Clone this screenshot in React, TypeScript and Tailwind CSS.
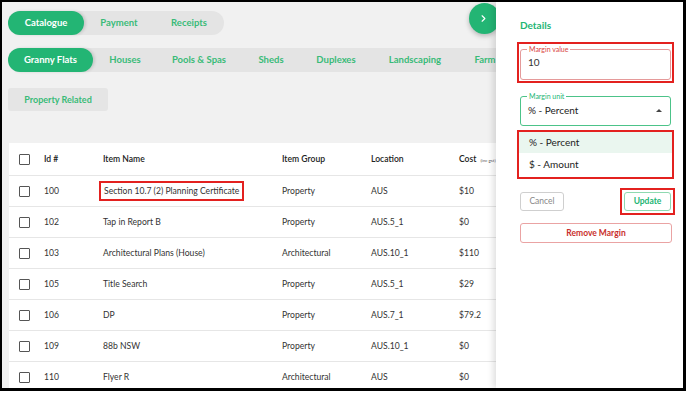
import { ChevronRight } from 'lucide-react'

const rows = [
  { id: '100', name: 'Section 10.7 (2) Planning Certificate', group: 'Property', loc: 'AUS', cost: '$10', marked: true },
  { id: '102', name: 'Tap in Report B', group: 'Property', loc: 'AUS.5_1', cost: '$0' },
  { id: '103', name: 'Architectural Plans (House)', group: 'Architectural', loc: 'AUS.10_1', cost: '$110' },
  { id: '105', name: 'Title Search', group: 'Property', loc: 'AUS.5_1', cost: '$29' },
  { id: '106', name: 'DP', group: 'Property', loc: 'AUS.7_1', cost: '$79.2' },
  { id: '109', name: '88b NSW', group: 'Property', loc: 'AUS.10_1', cost: '$0' },
  { id: '110', name: 'Flyer R', group: 'Architectural', loc: 'AUS', cost: '$0' },
]

const categories = [
  { label: 'Houses', w: 'w-[64px]' },
  { label: 'Pools & Spas', w: 'w-[84px]' },
  { label: 'Sheds', w: 'w-[60px]' },
  { label: 'Duplexes', w: 'w-[70px]' },
  { label: 'Landscaping', w: 'w-[88px]' },
  { label: 'Farm', w: 'w-[52px]' },
]

const cols = 'grid grid-cols-[35px_59px_179px_89px_88px_80px] items-center'

function Checkbox() {
  return <div className="ml-[10px] w-[11px] h-[11px] border border-[#555] rounded-[1px] bg-white" />
}

export default function App() {
  return (
    <div className="w-[688px] h-[393px] bg-white" style={{ fontFamily: 'Lato, "Open Sans", sans-serif' }}>
      <div className="w-[686px] h-[391px] border-black border-t-2 border-l-2 border-r-[3px] border-b-[3px] flex overflow-hidden">
        {/* Catalogue area */}
        <div className="relative w-[494px] h-full bg-[#f1f1f1] overflow-hidden">
          <div className="pl-[6px] pt-[9px]">
            <div className="flex w-[216px] h-[24px] rounded-full bg-[#e4e4e4] text-[9.5px] font-bold">
              <div className="w-[76px] rounded-full bg-[#23b574] text-white flex items-center justify-center shadow-[2px_0_3px_rgba(0,0,0,0.12)]">Catalogue</div>
              <div className="w-[70px] flex items-center justify-center text-[#39bb78]">Payment</div>
              <div className="w-[70px] flex items-center justify-center text-[#39bb78]">Receipts</div>
            </div>

            <div className="mt-[13px] flex h-[24px] w-[520px] rounded-l-full bg-[#e4e4e4] text-[9.5px] font-bold">
              <div className="w-[85px] rounded-full bg-[#23b574] text-white flex items-center justify-center shadow-[2px_0_3px_rgba(0,0,0,0.12)]">Granny Flats</div>
              {categories.map((c) => (
                <div key={c.label} className={`${c.w} flex items-center justify-center text-[#39bb78]`}>
                  {c.label}
                </div>
              ))}
            </div>

            <div className="mt-[16px] w-[100px] h-[23px] rounded-[3px] bg-[#e5e5e5] text-[#39bb78] text-[9px] font-bold flex items-center justify-center">
              Property Related
            </div>
          </div>

          {/* Table */}
          <div className="mt-[32px] ml-[7px] w-[520px] bg-white text-[8.6px] text-[#333]">
            <div className={`${cols} h-[33px] border-b border-[#e6e6e6] font-semibold text-[#222]`}>
              <Checkbox />
              <div>Id #</div>
              <div>Item Name</div>
              <div>Item Group</div>
              <div>Location</div>
              <div className="flex items-baseline gap-1">
                Cost <span className="text-[4.5px] font-normal text-[#555]">(inc gst)</span>
              </div>
            </div>
            {rows.map((r) => (
              <div key={r.id} className={`${cols} h-[31px] border-b border-[#e6e6e6]`}>
                <Checkbox />
                <div>{r.id}</div>
                <div>
                  {r.marked ? (
                    <span className="-ml-[4px] inline-block border-2 border-[#e3211f] px-[3px] py-[2px] leading-[12px]">{r.name}</span>
                  ) : (
                    r.name
                  )}
                </div>
                <div>{r.group}</div>
                <div>{r.loc}</div>
                <div>{r.cost}</div>
              </div>
            ))}
          </div>

          <div className="absolute left-[467px] top-[1px] w-[31px] h-[31px] rounded-full bg-[#23b574] shadow-[0_2px_5px_rgba(0,0,0,0.25)] flex items-center pl-[9px]">
            <ChevronRight className="w-[11px] h-[11px] text-white" strokeWidth={2.5} />
          </div>
        </div>

        {/* Details panel */}
        <div className="relative z-10 w-[187px] h-full bg-white shadow-[-3px_0_6px_rgba(0,0,0,0.12)] pl-[24px] pr-[10px] pt-[16px]">
          <div className="text-[10px] font-bold text-[#23b574] leading-[14px]">Details</div>

          <div className="mt-[10px] -ml-[3px] w-[157px] border-2 border-[#e3211f] pt-[1px] pb-[1px] px-px">
            <fieldset className="h-[35px] border border-[#e59a9a] rounded-[3px] px-[6px]">
              <legend className="px-[2px] text-[7px] leading-[8px] text-[#d9443e]">Margin value</legend>
              <div className="text-[10px] leading-[12px] text-[#333] pt-[3px] pl-[1px]">10</div>
            </fieldset>
          </div>

          <fieldset className="mt-[9px] w-[151px] h-[34px] border-[1.5px] border-[#4cc389] rounded-[3px] px-[6px]">
            <legend className="px-[2px] text-[7px] leading-[8px] text-[#23b574]">Margin unit</legend>
            <div className="flex items-center justify-between pt-[4px] pl-[1px] pr-[2px]">
              <span className="text-[10px] leading-[12px] text-[#222]">% - Percent</span>
              <span className="w-0 h-0 border-l-[3px] border-r-[3px] border-b-[3px] border-l-transparent border-r-transparent border-b-[#444]" />
            </div>
          </fieldset>

          <div className="mt-[4px] -ml-[3px] w-[157px] h-[49px] border-2 border-[#e3211f] text-[10px] text-[#222]">
            <div className="h-[21px] bg-[#eaf6ef] flex items-center pl-[10px]">% - Percent</div>
            <div className="h-[22px] flex items-center pl-[10px]">$ - Amount</div>
          </div>

          <div className="mt-[9px] flex items-center justify-between w-[155px]">
            <div className="w-[44px] h-[19px] border border-[#cfcfcf] rounded-[3px] text-[8.5px] text-[#888] flex items-center justify-center">
              Cancel
            </div>
            <div className="border-2 border-[#e3211f] p-[2px]">
              <div className="w-[47px] h-[19px] border border-[#8fd9b1] rounded-[3px] text-[8.5px] font-bold text-[#23b574] flex items-center justify-center">
                Update
              </div>
            </div>
          </div>

          <div className="mt-[8px] w-[152px] h-[20px] border border-[#eaa3a3] rounded-[3px] text-[8.5px] font-bold text-[#c9302c] flex items-center justify-center">
            Remove Margin
          </div>
        </div>
      </div>
    </div>
  )
}
